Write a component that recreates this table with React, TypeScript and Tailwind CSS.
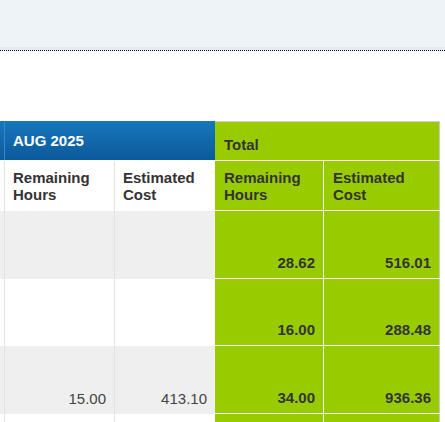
import React from "react";

const rows = [
  { a: "", b: "", c: "28.62", d: "516.01", gray: true, h: "h-[68px]" },
  { a: "", b: "", c: "16.00", d: "288.48", gray: false, h: "h-[67px]" },
  { a: "15.00", b: "413.10", c: "34.00", d: "936.36", gray: true, h: "h-[68px]" },
  { a: "", b: "", c: "", d: "", gray: false, h: "h-[40px]" },
];

export default function App() {
  return (
    <div
      className="w-[445px] h-[422px] overflow-hidden bg-white text-[15px] leading-[17px] text-[#333]"
      style={{ fontFamily: '"Liberation Sans", Arial, sans-serif' }}
    >
      <div className="flex flex-col">
        <div className="h-[47px] bg-[#eef3f8]" />
        <div className="h-[3px] bg-[#e2ebf5]" />
        <div className="h-0 border-t border-dotted border-black" />
      </div>

      <div className="mt-[70px] flex flex-col">
        {/* header row 1 */}
        <div className="flex h-[40px]">
          <div className="flex w-[215px] h-[39px] bg-linear-to-b from-[#1877bd] to-[#0b5a9b]">
            <div className="w-[5px] border-r border-[#3a88c5]" />
            <div className="flex items-center pl-[8px] font-bold text-white">AUG 2025</div>
          </div>
          <div className="w-[225px] border-t border-r border-b border-t-[#cfcfcf] border-r-[#c9c9c9] border-b-white bg-[#99cc00] pl-[9px] pt-[14px] font-bold">
            Total
          </div>
        </div>

        {/* header row 2 */}
        <div className="flex h-[50px] font-bold">
          <div className="w-[5px] border-r border-[#e2e2e2]" />
          <div className="w-[110px] border-r border-[#e2e2e2] pl-[8px] pt-[8px]">
            Remaining
            <br />
            Hours
          </div>
          <div className="w-[100px] pl-[8px] pt-[8px]">
            Estimated
            <br />
            Cost
          </div>
          <div className="w-[109px] border-r border-b border-white bg-[#99cc00] pl-[9px] pt-[8px]">
            Remaining
            <br />
            Hours
          </div>
          <div className="w-[116px] border-r border-b border-r-[#c9c9c9] border-b-white bg-[#99cc00] pl-[9px] pt-[8px]">
            Estimated
            <br />
            Cost
          </div>
        </div>

        {rows.map((r, i) => (
          <div key={i} className={`flex ${r.h}`}>
            <div className={`w-[5px] border-r border-[#e2e2e2] ${r.gray ? "bg-[#efefef]" : "bg-white"}`} />
            <div
              className={`flex w-[110px] items-end justify-end border-r border-[#e2e2e2] pr-[8px] pb-[7px] text-[#444] ${
                r.gray ? "bg-[#efefef]" : "bg-white"
              }`}
            >
              {r.a}
            </div>
            <div
              className={`flex w-[100px] items-end justify-end pr-[8px] pb-[7px] text-[#444] ${
                r.gray ? "bg-[#efefef]" : "bg-white"
              }`}
            >
              {r.b}
            </div>
            <div className="flex w-[109px] items-end justify-end border-r border-b border-white bg-[#99cc00] pr-[8px] pb-[7px] font-bold">
              {r.c}
            </div>
            <div className="flex w-[116px] items-end justify-end border-r border-b border-r-[#c9c9c9] border-b-white bg-[#99cc00] pr-[8px] pb-[7px] font-bold">
              {r.d}
            </div>
          </div>
        ))}
      </div>
    </div>
  );
}
